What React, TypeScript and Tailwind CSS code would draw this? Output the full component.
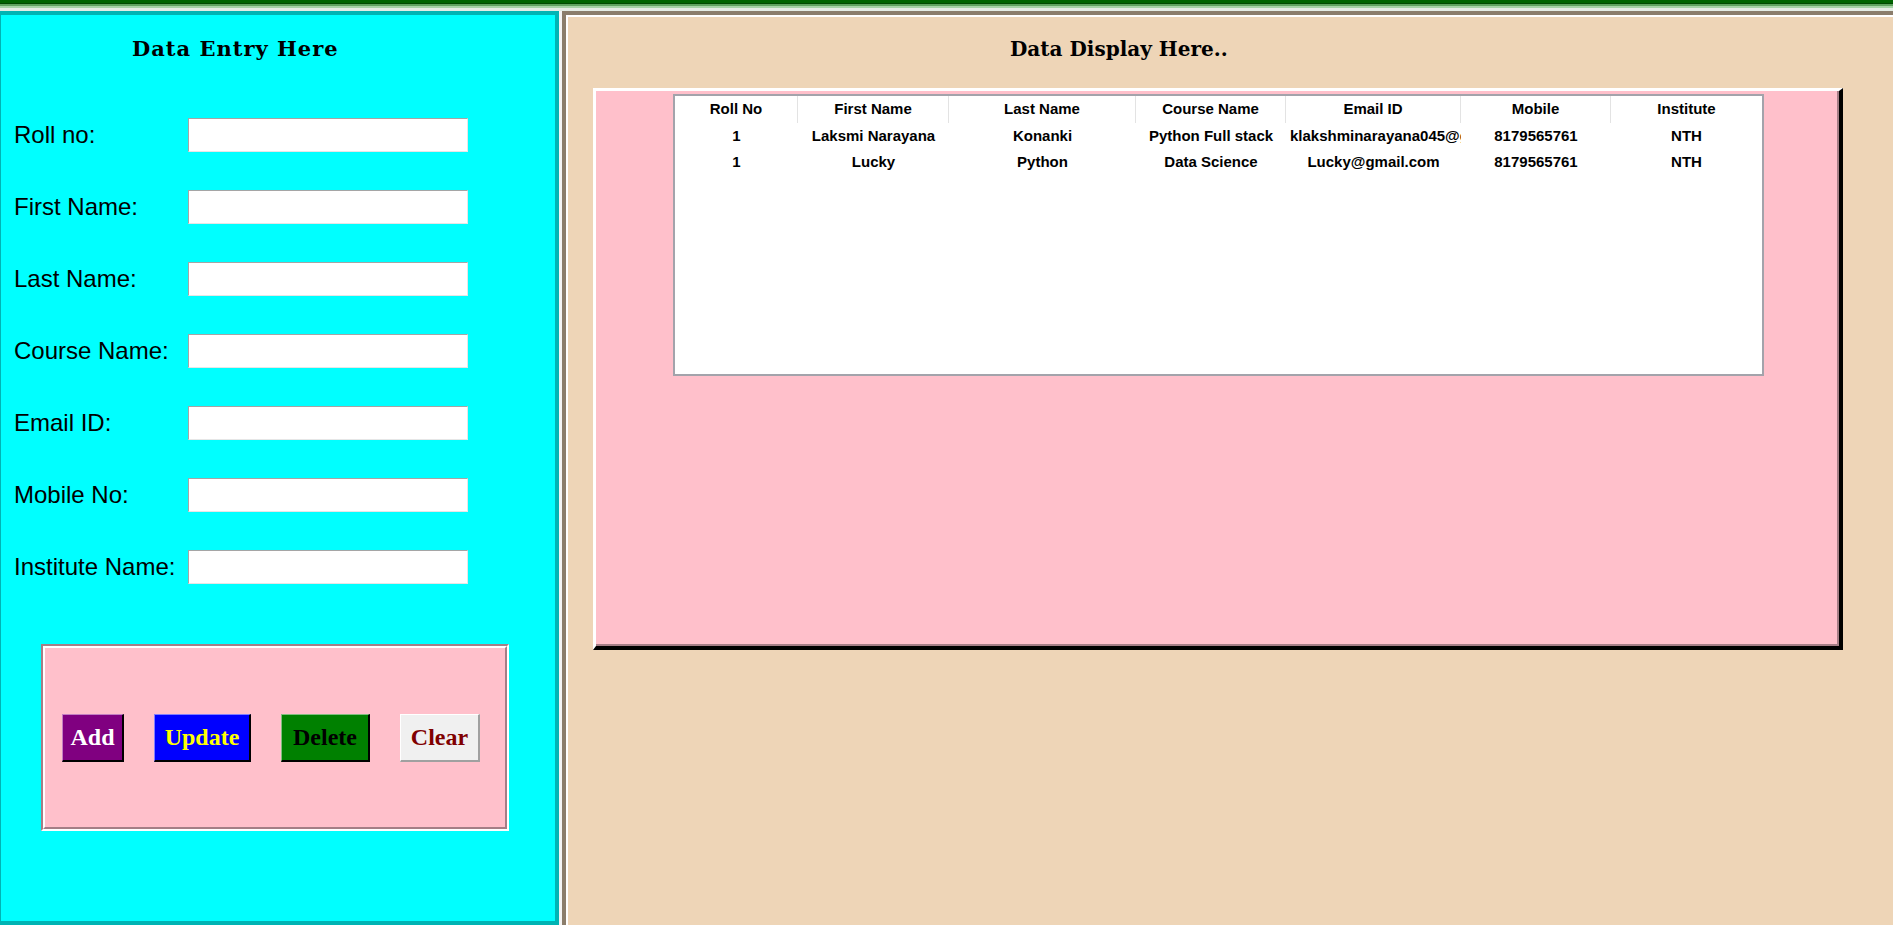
import React from "react";

type Student = {
  roll: string;
  first: string;
  last: string;
  course: string;
  email: string;
  mobile: string;
  institute: string;
};

const fields = [
  "Roll no:",
  "First Name:",
  "Last Name:",
  "Course Name:",
  "Email ID:",
  "Mobile No:",
  "Institute Name:",
];

const columns = [
  "Roll No",
  "First Name",
  "Last Name",
  "Course Name",
  "Email ID",
  "Mobile",
  "Institute",
];

const rows: Student[] = [
  {
    roll: "1",
    first: "Laksmi Narayana",
    last: "Konanki",
    course: "Python Full stack",
    email: "klakshminarayana045@gmail.com",
    mobile: "8179565761",
    institute: "NTH",
  },
  {
    roll: "1",
    first: "Lucky",
    last: "Python",
    course: "Data Science",
    email: "Lucky@gmail.com",
    mobile: "8179565761",
    institute: "NTH",
  },
];

const titleFont = { fontFamily: '"DejaVu Serif", serif' };
const btnFont = { fontFamily: '"Liberation Serif", serif' };

function Cell({ children, sep }: { children: React.ReactNode; sep?: boolean }) {
  return (
    <div
      className={`flex items-center justify-center-safe overflow-hidden whitespace-nowrap px-[4px] ${
        sep ? "border-r border-[#e3e3e3]" : ""
      }`}
    >
      {children}
    </div>
  );
}

export default function App() {
  return (
    <div
      className="w-[1893px] h-[925px] overflow-hidden flex flex-col bg-white"
      style={{ fontFamily: '"Liberation Sans", Arial, sans-serif' }}
    >
      {/* top strip */}
      <div className="h-[3px] bg-[#006400]" />
      <div className="h-[1px] bg-[#004a00]" />
      <div className="h-[2px] bg-[#5fa35f]" />
      <div className="h-[2px] bg-[#a6d3a6]" />
      <div className="h-[3px] bg-[#e4ece4]" />

      <div className="flex flex-1 min-h-0">
        {/* left: data entry */}
        <div className="w-[562px] border-r-[3px] border-[#f4f4f4] flex">
          <div className="flex-1 bg-[#00ffff] border-l border-t-4 border-r-4 border-b-4 border-[#00b4b4] flex flex-col">
            <div
              className="mt-[22px] pl-[131px] h-[24px] leading-[24px] text-[21px] tracking-[1px] font-bold text-black"
              style={titleFont}
            >
              Data Entry Here
            </div>

            <div className="mt-[57px] pl-[13px] flex flex-col gap-[38px]">
              {fields.map((f) => (
                <div key={f} className="flex items-center h-[34px]">
                  <label className="w-[174px] text-[24px] leading-none text-black">{f}</label>
                  <input
                    type="text"
                    className="w-[280px] h-[34px] bg-white border-t border-l border-t-[#a5a5a5] border-l-[#a5a5a5] border-b border-r border-b-[#e6e6e6] border-r-[#e6e6e6] outline-none px-1 text-[18px]"
                  />
                </div>
              ))}
            </div>

            {/* button frame */}
            <div className="mt-[60px] ml-[40px] w-[468px] h-[187px] border-t-2 border-l-2 border-[#a57e86] border-b-2 border-r-2 border-b-white border-r-white">
              <div className="h-full border-t-2 border-l-2 border-white border-b-2 border-r-2 border-b-[#a57e86] border-r-[#a57e86] bg-[#ffc0cb] flex items-center pl-[17px] gap-[30px]">
                <button
                  className="w-[62px] h-[48px] flex items-center justify-center bg-[#800080] text-white text-[24px] font-bold border-t border-l border-t-[#c27fc2] border-l-[#c27fc2] border-b-2 border-r-2 border-b-black border-r-black"
                  style={btnFont}
                >
                  Add
                </button>
                <button
                  className="w-[97px] h-[48px] flex items-center justify-center bg-[#0000ff] text-[#ffff00] text-[24px] font-bold border-t border-l border-t-[#7f7fff] border-l-[#7f7fff] border-b-2 border-r-2 border-b-black border-r-black"
                  style={btnFont}
                >
                  Update
                </button>
                <button
                  className="w-[89px] h-[48px] flex items-center justify-center bg-[#008000] text-black text-[24px] font-bold border-t border-l border-t-[#7fbf7f] border-l-[#7fbf7f] border-b-2 border-r-2 border-b-black border-r-black"
                  style={btnFont}
                >
                  Delete
                </button>
                <button
                  className="w-[80px] h-[48px] flex items-center justify-center bg-[#f0f0f0] text-[#800000] text-[24px] font-bold border-t border-l border-t-white border-l-white border-b-2 border-r-2 border-b-[#a0a0a0] border-r-[#a0a0a0]"
                  style={btnFont}
                >
                  Clear
                </button>
              </div>
            </div>
          </div>
        </div>

        {/* right: data display */}
        <div className="flex-1 border-t-4 border-l-4 border-[#8b7d6b] flex">
          <div className="flex-1 bg-[#eed5b7] border-t-2 border-l-2 border-white flex flex-col">
            <div
              className="mt-[20px] pl-[442px] h-[24px] leading-[24px] text-[20px] font-bold text-black"
              style={titleFont}
            >
              Data Display Here..
            </div>

            <div className="mt-[27px] ml-[25px] w-[1250px] h-[562px] border-t-[3px] border-l-[3px] border-white border-b-4 border-r-4 border-b-black border-r-black">
              <div className="h-full bg-[#ffc0cb] border-b-2 border-r-2 border-[#a57e86] pt-[3px] pl-[77px]">
                <div className="w-[1091px] h-[282px] bg-white border-2 border-[#a3a3ab] text-[15px] font-bold text-black">
                  <div className="grid grid-cols-[123px_151px_187px_150px_175px_150px_151px] h-[27px]">
                    {columns.map((c, i) => (
                      <Cell key={c} sep={i < columns.length - 1}>
                        {c}
                      </Cell>
                    ))}
                  </div>
                  {rows.map((r, i) => (
                    <div
                      key={i}
                      className="grid grid-cols-[123px_151px_187px_150px_175px_150px_151px] h-[26px]"
                    >
                      <Cell>{r.roll}</Cell>
                      <Cell>{r.first}</Cell>
                      <Cell>{r.last}</Cell>
                      <Cell>{r.course}</Cell>
                      <Cell>{r.email}</Cell>
                      <Cell>{r.mobile}</Cell>
                      <Cell>{r.institute}</Cell>
                    </div>
                  ))}
                </div>
              </div>
            </div>
          </div>
        </div>
      </div>
    </div>
  );
}
